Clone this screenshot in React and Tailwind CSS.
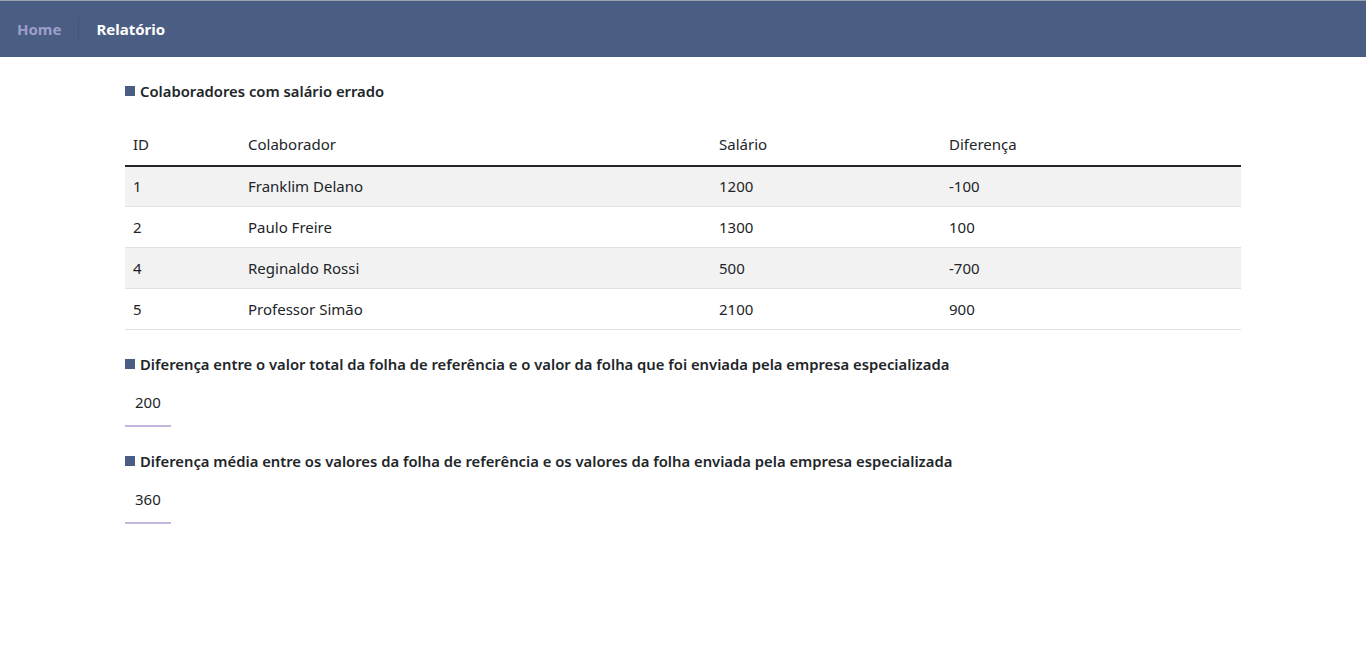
import React from 'react';

const rows = [
  { id: 1, nome: 'Franklim Delano', salario: 1200, diferenca: -100 },
  { id: 2, nome: 'Paulo Freire', salario: 1300, diferenca: 100 },
  { id: 4, nome: 'Reginaldo Rossi', salario: 500, diferenca: -700 },
  { id: 5, nome: 'Professor Simão', salario: 2100, diferenca: 900 },
];

const SectionTitle = ({ children, className = '' }) => (
  <h2 className={`flex items-center text-[14.8px] font-semibold text-[#212529] ${className}`}>
    <span className="w-[10px] h-[10px] bg-[#4a5d83] mr-[5px] shrink-0" />
    {children}
  </h2>
);

const ValueBox = ({ value }) => (
  <div className="w-[46px] border-b-2 border-[#c5b6e0] pl-[10px] pt-[16px] pb-[11px] text-[15px] text-[#212529]">
    {value}
  </div>
);

const App = () => {
  return (
    <div className="min-h-screen bg-white font-['Noto_Sans',sans-serif] text-[#212529]">
      <nav className="h-[57px] bg-[#4a5d83] border-t border-[#9aa0ab] flex items-center">
        <a className="px-[17px] text-[15px] font-bold text-[#9e9dcb] border-r border-[#43557a] leading-[24px]">Home</a>
        <a className="pl-[17px] text-[15px] font-bold text-white">Relatório</a>
      </nav>

      <main className="mx-[125px] pt-[23px]">
        <SectionTitle>Colaboradores com salário errado</SectionTitle>

        <table className="w-full mt-[22px] text-[15px] border-collapse">
          <thead>
            <tr className="border-b-2 border-[#212529]">
              <th className="w-[115px] text-left font-normal px-[8px] py-[9px]">ID</th>
              <th className="w-[471px] text-left font-normal px-[8px] py-[9px]">Colaborador</th>
              <th className="w-[230px] text-left font-normal px-[8px] py-[9px]">Salário</th>
              <th className="text-left font-normal px-[8px] py-[9px]">Diferença</th>
            </tr>
          </thead>
          <tbody>
            {rows.map((r, i) => (
              <tr key={r.id} className={`border-b border-[#dee2e6] ${i % 2 === 0 ? 'bg-[#f2f2f2]' : 'bg-white'}`}>
                <td className="px-[8px] h-[41px]">{r.id}</td>
                <td className="px-[8px] h-[41px]">{r.nome}</td>
                <td className="px-[8px] h-[41px]">{r.salario}</td>
                <td className="px-[8px] h-[41px]">{r.diferenca}</td>
              </tr>
            ))}
          </tbody>
        </table>

        <SectionTitle className="mt-[23px]">
          Diferença entre o valor total da folha de referência e o valor da folha que foi enviada pela empresa especializada
        </SectionTitle>
        <ValueBox value={200} />

        <SectionTitle className="mt-[23px]">
          Diferença média entre os valores da folha de referência e os valores da folha enviada pela empresa especializada
        </SectionTitle>
        <ValueBox value={360} />
      </main>
    </div>
  );
};

export default App;
